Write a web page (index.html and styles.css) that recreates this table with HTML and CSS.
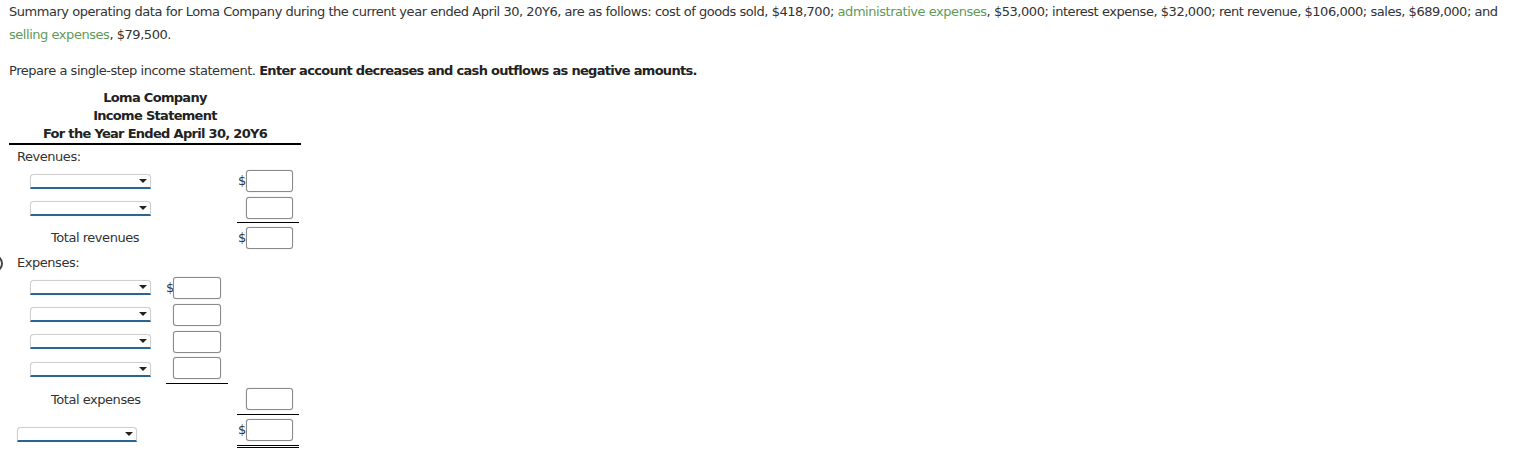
FILE: index.html
```html
<!DOCTYPE html>
<html>
<head>
<meta charset="utf-8">
<link rel="stylesheet" href="styles.css">
</head>
<body>
<div class="page">
  <p class="intro">Summary operating data for Loma Company during the current year ended April 30, 20Y6, are as follows: cost of goods sold, $418,700; <span class="term">administrative expenses</span>, $53,000; interest expense, $32,000; rent revenue, $106,000; sales, $689,000; and <span class="term">selling expenses</span>, $79,500.</p>
  <p class="instr">Prepare a single-step income statement. <b>Enter account decreases and cash outflows as negative amounts.</b></p>

  <div class="stmt">
    <div class="titles">
      <div>Loma Company</div>
      <div>Income Statement</div>
      <div>For the Year Ended April 30, 20Y6</div>
    </div>

    <div class="row r-label r-rev">
      <div class="c1 lbl">Revenues:</div><div class="c2"></div><div class="c3"></div>
    </div>
    <div class="row r-a">
      <div class="c1"><span class="dd"></span></div>
      <div class="c2"></div>
      <div class="c3"><span class="amt"><span class="cur">$</span><span class="box"></span></span></div>
    </div>
    <div class="row r-b">
      <div class="c1"><span class="dd"></span></div>
      <div class="c2"></div>
      <div class="c3"><span class="amt ul"><span class="cur"></span><span class="box"></span></span></div>
    </div>
    <div class="row r-c">
      <div class="c1 tot">Total revenues</div>
      <div class="c2"></div>
      <div class="c3"><span class="amt"><span class="cur">$</span><span class="box"></span></span></div>
    </div>

    <div class="row r-label r-exp">
      <div class="c1 lbl">Expenses:</div><div class="c2"></div><div class="c3"></div>
    </div>
    <div class="row r-d">
      <div class="c1"><span class="dd"></span></div>
      <div class="c2"><span class="amt"><span class="cur">$</span><span class="box"></span></span></div>
      <div class="c3"></div>
    </div>
    <div class="row r-d">
      <div class="c1"><span class="dd"></span></div>
      <div class="c2"><span class="amt"><span class="cur"></span><span class="box"></span></span></div>
      <div class="c3"></div>
    </div>
    <div class="row r-d">
      <div class="c1"><span class="dd"></span></div>
      <div class="c2"><span class="amt"><span class="cur"></span><span class="box"></span></span></div>
      <div class="c3"></div>
    </div>
    <div class="row r-e">
      <div class="c1"><span class="dd"></span></div>
      <div class="c2"><span class="amt ul"><span class="cur"></span><span class="box"></span></span></div>
      <div class="c3"></div>
    </div>
    <div class="row r-f">
      <div class="c1 tot">Total expenses</div>
      <div class="c2"></div>
      <div class="c3"><span class="amt ul"><span class="cur"></span><span class="box"></span></span></div>
    </div>
    <div class="row r-g">
      <div class="c1"><span class="dd dd-wide"></span></div>
      <div class="c2"></div>
      <div class="c3"><span class="amt dbl"><span class="cur">$</span><span class="box"></span></span></div>
    </div>
  </div>
  <span class="ring"></span>
</div>
</body>
</html>
```

FILE: styles.css
```css
html, body {
  margin: 0;
  padding: 0;
  background: #fff;
}
body {
  font-family: "DejaVu Sans", Verdana, sans-serif;
  font-size: 13px;
  letter-spacing: -0.46px;
  color: #333;
}
.page {
  position: relative;
  padding: 0 0 0 9px;
}
p {
  margin: 0;
  line-height: 23.4px;
}
.term {
  color: #5f9a5b;
}
.instr {
  margin-top: 12px;
}
.instr b {
  font-weight: bold;
  letter-spacing: -0.7px;
  color: #222;
}
.stmt {
  width: 292px;
  margin-top: 6px;
}
.titles {
  text-align: center;
  font-weight: bold;
  letter-spacing: -0.7px;
  line-height: 18px;
  color: #222;
  padding-top: 1px;
  border-bottom: 2px solid #000;
}
.row {
  display: grid;
  grid-template-columns: 151px 70px 71px;
  align-items: center;
}
.c1 {
  display: flex;
  align-items: center;
}
.c2, .c3 {
  display: flex;
}
.c2 .amt { margin-left: 6px; }
.c3 .amt { margin-left: 7px; }
.amt {
  display: flex;
  align-items: center;
  width: 62px;
  padding: 3px 0;
}
.cur {
  width: 8px;
  text-align: left;
  font-size: 13px;
  line-height: 14px;
  letter-spacing: 0;
}
.c3 .cur { padding-left: 1px; width: 8px; }
.c2 .cur { width: 7px; }
.box {
  display: block;
  width: 45px;
  height: 20px;
  border: 1px solid #8a8a8a;
  border-radius: 3px;
  box-shadow: 0 0 1px #9a9a9a;
  background: #fff;
}
.c2 .box { width: 46px; }
.ul { border-bottom: 1px solid #000; }
.dbl { border-bottom: 3px double #000; }

.lbl {
  padding-left: 8px;
  line-height: 22px;
}
.tot {
  padding-left: 42px;
  line-height: 22px;
}
.dd {
  position: relative;
  display: block;
  box-sizing: border-box;
  margin-left: 21px;
  width: 121px;
  height: 15px;
  border: 1px solid #cfcfcf;
  border-bottom: 2px solid #2b6593;
  border-radius: 4px 4px 0 0;
  background: #fff;
  box-shadow: 0 0 1px #d8d8d8;
}
.dd::after {
  content: "";
  position: absolute;
  right: 3px;
  top: 4px;
  border-left: 4px solid transparent;
  border-right: 4px solid transparent;
  border-top: 4px solid #222;
}
.dd-wide {
  margin-left: 8px;
  width: 120px;
  margin-top: 5px;
}

.r-rev { height: 23px; }
.r-rev .lbl { line-height: 23px; }
.r-a .amt { padding: 2px 0 2px; }
.r-b .amt { padding: 3px 0 3px; }
.r-c .amt { padding: 4px 0 3px; }
.r-exp { height: 22px; }
.r-d .amt { padding: 3px 0 2px; }
.r-e .amt { padding: 2px 0 4px; }
.r-f .amt { padding: 4px 0 4px; }
.r-g .amt { padding: 4px 0 4px; }

.ring {
  position: absolute;
  left: -13px;
  top: 255px;
  width: 12px;
  height: 13px;
  border: 2px solid #444;
  border-radius: 50%;
}
```
